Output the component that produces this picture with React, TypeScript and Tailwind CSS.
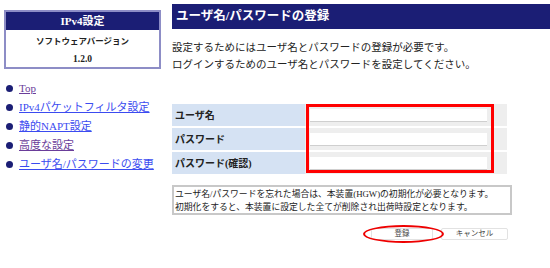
import React from 'react';

const font = { fontFamily: '"Liberation Serif", "Noto Sans CJK JP", serif' };

const navItems = [
  { label: 'Top', visited: true },
  { label: 'IPv4パケットフィルタ設定', visited: false },
  { label: '静的NAPT設定', visited: false },
  { label: '高度な設定', visited: true },
  { label: 'ユーザ名/パスワードの変更', visited: false },
];

const rows = ['ユーザ名', 'パスワード', 'パスワード(確認)'];

export default function App() {
  return (
    <div
      className="relative w-[550px] h-[268px] bg-white flex overflow-hidden text-[#222]"
      style={font}
    >
      {/* sidebar */}
      <div className="w-[172px] shrink-0 pl-[4px] pt-[10px]">
        <div className="w-[157px] border-2 border-[#8d8dc6]">
          <div className="h-[18px] bg-[#1b1e75] text-white text-[11px] font-bold flex items-center justify-center">
            IPv4設定
          </div>
          <div className="h-[37px] flex flex-col items-center text-[8.5px] font-bold">
            <div className="mt-[5px]">ソフトウェアバージョン</div>
            <div className="mt-[4px] text-[9.5px]">1.2.0</div>
          </div>
        </div>
        <ul className="mt-[13px] flex flex-col gap-[6px]">
          {navItems.map((item) => (
            <li key={item.label} className="flex items-center h-[13px]">
              <span className="w-[7px] h-[7px] rounded-full bg-[#1b1e75] ml-[2px] mr-[6px]" />
              <a
                href="#"
                className={`text-[11px] underline ${item.visited ? 'text-[#6a3d9a]' : 'text-[#3b4bf0]'}`}
              >
                {item.label}
              </a>
            </li>
          ))}
        </ul>
      </div>

      {/* main */}
      <div className="flex-1 pt-[4px]">
        <div className="h-[25px] bg-[#1b1e75] text-white text-[12.5px] font-bold flex items-center px-[4px]">
          ユーザ名/パスワードの登録
        </div>
        <div className="mt-[10px] text-[10.5px] leading-[17px]">
          <p>設定するためにはユーザ名とパスワードの登録が必要です。</p>
          <p>ログインするためのユーザ名とパスワードを設定してください。</p>
        </div>

        <div className="mt-[31px] w-[335px] flex flex-col gap-[2px]">
          {rows.map((label) => (
            <div key={label} className="flex h-[22px]">
              <div className="w-[133px] bg-[#d5e2f3] text-[10px] font-bold flex items-center pl-[3px]">
                {label}
              </div>
              <div className="flex-1 bg-[#eeeeee] flex items-center pl-[5px]">
                <div className="w-[177px] h-[13px] bg-white border-b border-[#cfcfcf]" />
              </div>
            </div>
          ))}
        </div>

        <div className="mt-[11px] w-[340px] h-[30px] border-2 border-[#c8c8c8] text-[8.8px] leading-[13px] px-[1px] py-[1px]">
          <p>ユーザ名/パスワードを忘れた場合は、本装置(HGW)の初期化が必要となります。</p>
          <p>初期化をすると、本装置に設定した全てが削除され出荷時設定となります。</p>
        </div>

        <div className="mt-[13px] w-[336px] flex justify-end gap-[8px]">
          <button className="w-[62px] h-[12px] bg-white border border-[#e2e2e2] rounded-[2px] text-[7.5px] text-[#444] leading-none">
            登録
          </button>
          <button className="w-[67px] h-[12px] bg-white border border-[#e2e2e2] rounded-[2px] text-[7.5px] text-[#444] leading-none">
            キャンセル
          </button>
        </div>
      </div>

      {/* red annotations */}
      <div className="absolute left-[306px] top-[104px] w-[188px] h-[69px] border-[3px] border-[#ff0000]" />
      <div className="absolute left-[363px] top-[225px] w-[81px] h-[18px] border-2 border-[#ee0000] rounded-[50%]" />
    </div>
  );
}
